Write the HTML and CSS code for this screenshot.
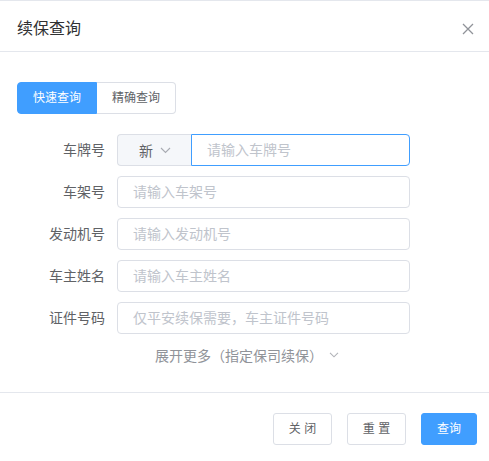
FILE: index.html
```html
<!DOCTYPE html>
<html lang="zh-CN">
<head>
<meta charset="utf-8">
<title>续保查询</title>
<link rel="stylesheet" href="styles.css">
</head>
<body>
<div class="dialog">
  <div class="dialog-header">
    <span class="dialog-title">续保查询</span>
    <button class="dialog-close" aria-label="关闭">
      <svg width="12" height="12" viewBox="0 0 12 12"><path d="M1 1L11 11M11 1L1 11" stroke="#909399" stroke-width="1.3" fill="none"/></svg>
    </button>
  </div>
  <div class="dialog-body">
    <div class="tabs">
      <span class="tab tab-active">快速查询</span>
      <span class="tab">精确查询</span>
    </div>
    <div class="form">
      <div class="form-row">
        <label class="form-label">车牌号</label>
        <div class="input-group">
          <div class="prefix">
            <span>新</span>
            <svg width="11" height="7" viewBox="0 0 11 7"><path d="M1 1L5.5 5.5L10 1" stroke="#a8abb2" stroke-width="1.1" fill="none"/></svg>
          </div>
          <input class="input input-focus" placeholder="请输入车牌号">
        </div>
      </div>
      <div class="form-row">
        <label class="form-label">车架号</label>
        <input class="input input-full" placeholder="请输入车架号">
      </div>
      <div class="form-row">
        <label class="form-label">发动机号</label>
        <input class="input input-full" placeholder="请输入发动机号">
      </div>
      <div class="form-row">
        <label class="form-label">车主姓名</label>
        <input class="input input-full" placeholder="请输入车主姓名">
      </div>
      <div class="form-row">
        <label class="form-label">证件号码</label>
        <input class="input input-full" placeholder="仅平安续保需要，车主证件号码">
      </div>
    </div>
    <div class="expand">
      <span class="expand-text">展开更多（指定保司续保）</span>
      <svg width="10" height="6" viewBox="0 0 10 6"><path d="M1 0.8L5 4.8L9 0.8" stroke="#b1b3b8" stroke-width="1.1" fill="none"/></svg>
    </div>
  </div>
  <div class="dialog-footer">
    <button class="btn btn-wide">关 闭</button>
    <button class="btn btn-wide">重 置</button>
    <button class="btn btn-primary">查询</button>
  </div>
</div>
</body>
</html>
```

FILE: styles.css
```css
* { box-sizing: border-box; }
html, body {
  margin: 0;
  padding: 0;
  background: #fff;
}
body {
  font-family: "Helvetica Neue", "Liberation Sans", "Noto Sans CJK SC", sans-serif;
  color: #606266;
  width: 489px;
  height: 461px;
  overflow: hidden;
}
.dialog {
  border-top: 1px solid #e4e7ed;
  height: 461px;
  display: flex;
  flex-direction: column;
}
.dialog-header {
  display: flex;
  align-items: center;
  justify-content: space-between;
  height: 51px;
  padding: 5px 14px 0 17px;
  border-bottom: 1px solid #e4e7ed;
}
.dialog-title {
  font-size: 16px;
  line-height: 24px;
  color: #303133;
}
.dialog-close {
  border: 0;
  background: none;
  padding: 0;
  width: 14px;
  height: 14px;
  display: flex;
  align-items: center;
  justify-content: center;
}
.dialog-body {
  padding: 30px 17px 0 17px;
  flex: 1;
}
.tabs {
  display: flex;
}
.tab {
  height: 32px;
  line-height: 30px;
  font-size: 12px;
  text-align: center;
  border: 1px solid #dcdfe6;
  color: #606266;
  width: 79px;
}
.tab-active {
  width: 80px;
  background: #409eff;
  border-color: #409eff;
  color: #fff;
  border-radius: 4px 0 0 4px;
}
.tab:last-child {
  border-left: 0;
  border-radius: 0 4px 4px 0;
}
.form {
  margin-top: 20px;
  display: flex;
  flex-direction: column;
  gap: 10px;
}
.form-row {
  display: flex;
  align-items: center;
  height: 32px;
}
.form-label {
  width: 100px;
  padding-right: 12px;
  text-align: right;
  font-size: 14px;
  color: #606266;
  line-height: 32px;
}
.input {
  height: 32px;
  border: 1px solid #dcdfe6;
  border-radius: 4px;
  padding: 0 15px;
  font-family: inherit;
  font-size: 14px;
  color: #606266;
  outline: none;
  background: #fff;
}
.input::placeholder {
  color: #c0c4cc;
}
.input-full {
  width: 293px;
}
.input-group {
  display: flex;
  width: 293px;
}
.prefix {
  width: 74px;
  height: 32px;
  background: #f5f7fa;
  border: 1px solid #dcdfe6;
  border-right: 0;
  border-radius: 4px 0 0 4px;
  display: flex;
  align-items: center;
  padding-left: 21px;
  gap: 7px;
  font-size: 14px;
  color: #606266;
}
.input-focus {
  width: 219px;
  border-color: #409eff;
  border-radius: 0 4px 4px 0;
}
.expand {
  margin-top: 10px;
  height: 22px;
  display: flex;
  align-items: center;
  justify-content: center;
  gap: 6px;
  font-size: 14px;
  color: #909399;
  padding-left: 5px;
}
.expand-text {
  font-family: "Noto Sans CJK SC", sans-serif;
  font-feature-settings: "chws" 0, "halt" 0, "palt" 0;
  font-variant-east-asian: full-width;
}
.dialog-footer {
  border-top: 1px solid #e4e7ed;
  height: 69px;
  padding: 20px 12px 0 0;
  display: flex;
  justify-content: flex-end;
  align-items: flex-start;
  gap: 15px;
}
.btn {
  height: 32px;
  padding: 0 15px;
  border: 1px solid #dcdfe6;
  border-radius: 3px;
  background: #fff;
  color: #606266;
  font-family: inherit;
  font-size: 12px;
  line-height: 30px;
}
.btn-wide {
  width: 59px;
  padding: 0;
}
.btn-primary {
  width: 56px;
  padding: 0;
  background: #409eff;
  border-color: #409eff;
  color: #fff;
}
```
